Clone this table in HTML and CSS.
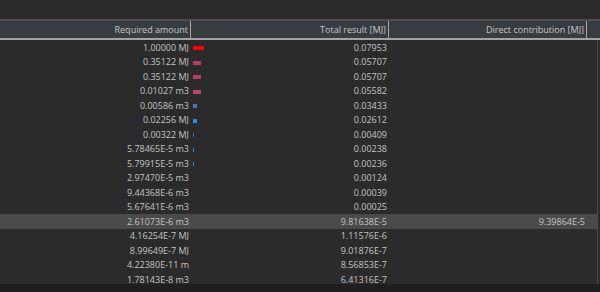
FILE: index.html
```html
<!DOCTYPE html>
<html lang="en">
<head>
    <meta charset="UTF-8">
    <title>Contribution tree</title>
    <link rel="stylesheet" href="styles.css">
</head>
<body>
    <div class="view">
        <div class="topbar"></div>

        <div class="header">
            <div class="hcell">Required amount</div>
            <div class="hcell">Total result [MJ]</div>
            <div class="hcell">Direct contribution [MJ]</div>
            <div class="hcell filler"></div>
        </div>

        <div class="rows">
            <div class="row">
                <div class="cell">1.00000 MJ</div>
                <div class="cell result"><span class="bar red" style="width: 11px"></span>0.07953</div>
                <div class="cell"></div>
            </div>
            <div class="row">
                <div class="cell">0.35122 MJ</div>
                <div class="cell result"><span class="bar pink" style="width: 8px"></span>0.05707</div>
                <div class="cell"></div>
            </div>
            <div class="row">
                <div class="cell">0.35122 MJ</div>
                <div class="cell result"><span class="bar pink" style="width: 8px"></span>0.05707</div>
                <div class="cell"></div>
            </div>
            <div class="row">
                <div class="cell">0.01027 m3</div>
                <div class="cell result"><span class="bar rose" style="width: 8px"></span>0.05582</div>
                <div class="cell"></div>
            </div>
            <div class="row">
                <div class="cell">0.00586 m3</div>
                <div class="cell result"><span class="bar indigo" style="width: 4px"></span>0.03433</div>
                <div class="cell"></div>
            </div>
            <div class="row">
                <div class="cell">0.02256 MJ</div>
                <div class="cell result"><span class="bar blue" style="width: 4px"></span>0.02612</div>
                <div class="cell"></div>
            </div>
            <div class="row">
                <div class="cell">0.00322 MJ</div>
                <div class="cell result"><span class="bar blue" style="width: 1px"></span>0.00409</div>
                <div class="cell"></div>
            </div>
            <div class="row">
                <div class="cell">5.78465E-5 m3</div>
                <div class="cell result"><span class="bar blue" style="width: 1px"></span>0.00238</div>
                <div class="cell"></div>
            </div>
            <div class="row">
                <div class="cell">5.79915E-5 m3</div>
                <div class="cell result"><span class="bar blue" style="width: 1px"></span>0.00236</div>
                <div class="cell"></div>
            </div>
            <div class="row">
                <div class="cell">2.97470E-5 m3</div>
                <div class="cell result">0.00124</div>
                <div class="cell"></div>
            </div>
            <div class="row">
                <div class="cell">9.44368E-6 m3</div>
                <div class="cell result">0.00039</div>
                <div class="cell"></div>
            </div>
            <div class="row">
                <div class="cell">5.67641E-6 m3</div>
                <div class="cell result">0.00025</div>
                <div class="cell"></div>
            </div>
            <div class="row selected">
                <div class="cell">2.61073E-6 m3</div>
                <div class="cell result">9.81638E-5</div>
                <div class="cell">9.39864E-5</div>
            </div>
            <div class="row">
                <div class="cell">4.16254E-7 MJ</div>
                <div class="cell result">1.11576E-6</div>
                <div class="cell"></div>
            </div>
            <div class="row">
                <div class="cell">8.99649E-7 MJ</div>
                <div class="cell result">9.01876E-7</div>
                <div class="cell"></div>
            </div>
            <div class="row">
                <div class="cell">4.22380E-11 m</div>
                <div class="cell result">8.56853E-7</div>
                <div class="cell"></div>
            </div>
            <div class="row">
                <div class="cell">1.78143E-8 m3</div>
                <div class="cell result">6.41316E-7</div>
                <div class="cell"></div>
            </div>
        </div>

        <div class="hscroll"></div>
    </div>
</body>
</html>
```

FILE: styles.css
```css
body {
    margin: 0;
    background-color: #2b2b2b;
    font-family: "Open Sans", "Noto Sans", sans-serif;
    font-size: 9px;
    color: #c4c4c4;
}
.view {
    width: 600px;
    height: 292px;
    display: flex;
    flex-direction: column;
    overflow: hidden;
}
.topbar {
    height: 19px;
    flex: none;
}
.header {
    flex: none;
    display: grid;
    grid-template-columns: 191px 198px 198px 1fr;
    height: 17px;
    background: #373c40;
    border-top: 2px solid #4d4f51;
    border-bottom: 2px solid #a3a3a3;
}
.hcell {
    display: flex;
    align-items: center;
    justify-content: flex-end;
    padding-right: 2px;
    border-right: 1px solid #a8a8a8;
    color: #c8c8c8;
}
.hcell.filler {
    border-right: none;
}
.rows {
    flex: 1;
    overflow: hidden;
    border-right: 1px solid #4a4a4a;
    margin-right: 2px;
}
.row {
    display: grid;
    grid-template-columns: 191px 198px 198px;
    height: 14.5px;
}
.row.selected {
    background: #4a4a4a;
}
.cell {
    display: flex;
    align-items: center;
    justify-content: flex-end;
    padding-right: 2px;
    white-space: nowrap;
}
.result {
    position: relative;
}
.bar {
    position: absolute;
    left: 2px;
    top: 6px;
    height: 4px;
}
.red { background: #ff0000; }
.pink { background: #b93c62; }
.rose { background: #bf4670; }
.indigo { background: #4f6fc4; }
.blue { background: #218ee0; }
.hscroll {
    height: 8px;
    flex: none;
    background: #1f1f1f;
}
```
